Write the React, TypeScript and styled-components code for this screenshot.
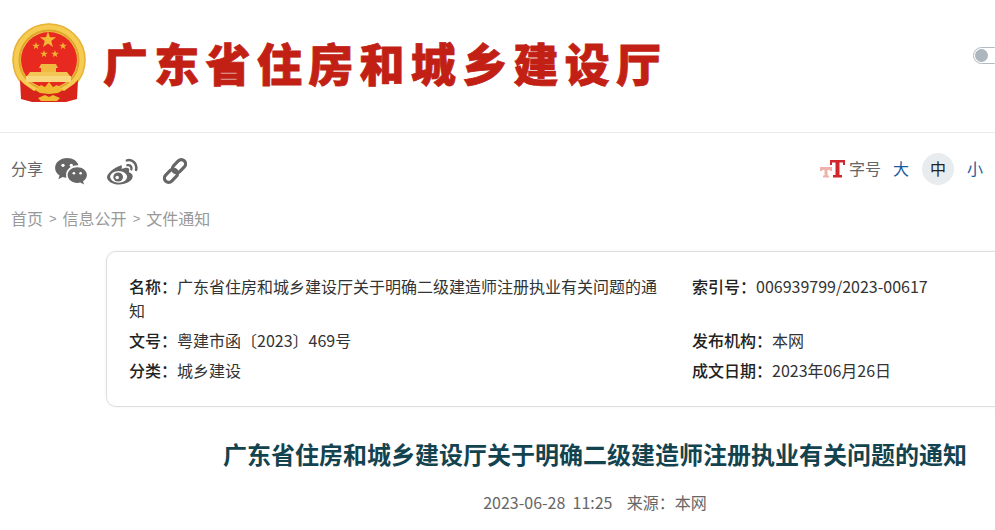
import React from 'react';
import styled, {createGlobalStyle} from 'styled-components';

const GlobalStyle = createGlobalStyle`
  html, body {
    margin: 0;
    padding: 0;
    background: #fff;
    overflow: hidden;
  }
  body {
    font-family: "Noto Sans CJK SC", "Liberation Sans", sans-serif;
  }
`;

const COLON = '\uFF1A';

const Page = styled.div`
  width: 995px;
  height: 530px;
  overflow: hidden;
`;

const Header = styled.header`
  display: flex;
  align-items: center;
  height: 133px;
  box-sizing: border-box;
  padding: 0 0 6px 12px;
  border-bottom: 1px solid #ebebeb;
`;

const SiteTitle = styled.h1`
  margin: 0 0 0 17px;
  font-size: 45px;
  font-weight: 900;
  line-height: 50px;
  letter-spacing: 6.3px;
  white-space: nowrap;
  color: #c21f15;
  -webkit-text-stroke: 0.8px #c21f15;
`;

const Toggle = styled.div`
  width: 30px;
  height: 17px;
  margin-left: auto;
  margin-right: -8px;
  flex: none;
  box-sizing: border-box;
  border: 1px solid #b4bac2;
  border-radius: 9px;
  padding: 1px;
  position: relative;
  top: -8px;
  &::before {
    content: '';
    display: block;
    width: 13px;
    height: 13px;
    border-radius: 50%;
    background: #adb5bd;
  }
`;

const ToolBar = styled.div`
  display: flex;
  align-items: center;
  justify-content: space-between;
  height: 38px;
  margin-top: 19px;
  padding: 0 4px 0 11px;
`;

const ShareGroup = styled.div`
  display: flex;
  align-items: center;
`;

const ToolLabel = styled.span`
  font-size: 16px;
  line-height: 20px;
  padding-bottom: 6px;
  color: #666;
`;

const ShareIcon = styled.svg<{$gap: number}>`
  display: block;
  fill: #666;
  margin-left: ${p => p.$gap}px;
`;

const SizeGroup = styled.div`
  display: flex;
  align-items: center;
  gap: 5px;
  padding-bottom: 4px;
`;

const SizeLabelGroup = styled.div`
  display: flex;
  align-items: center;
  margin-right: -1px;
`;

const SizeLabel = styled.span`
  font-size: 16px;
  line-height: 20px;
  padding-bottom: 2px;
  color: #666;
`;

const SizeButton = styled.span<{$active?: boolean}>`
  width: 32px;
  height: 32px;
  display: flex;
  align-items: center;
  justify-content: center;
  border-radius: 50%;
  font-size: 16px;
  padding-bottom: 2px;
  box-sizing: border-box;
  color: ${p => (p.$active ? '#222' : '#1a5a9e')};
  background: ${p => (p.$active ? '#e9ecef' : 'transparent')};
`;

const Crumbs = styled.nav`
  display: flex;
  align-items: center;
  height: 24px;
  margin-top: 16px;
  padding-left: 11px;
  font-size: 16px;
  color: #999;
`;

const CrumbSep = styled.span`
  margin: 0 6px;
  font-size: 13px;
  font-family: "Liberation Sans", sans-serif;
`;

const InfoCard = styled.section`
  width: 1000px;
  height: 156px;
  box-sizing: border-box;
  margin: 21px 0 0 106px;
  padding: 22px 0 0 22px;
  background: #fff;
  border: 1px solid #dedede;
  border-radius: 10px;
  box-shadow: 0 0 3px rgba(0, 0, 0, 0.06);
  display: grid;
  grid-template-columns: 563px 1fr;
  grid-auto-rows: min-content;
  row-gap: 6px;
`;

const InfoRow = styled.div`
  max-width: 540px;
  font-size: 16px;
  line-height: 24px;
  color: #333;
`;

const InfoKey = styled.b`
  font-weight: 500;
  color: #222;
`;

const ArticleHead = styled.div`
  width: 1000px;
  margin-left: 95px;
  text-align: center;
`;

const ArticleTitle = styled.h2`
  margin: 29px 0 0;
  font-size: 24px;
  font-weight: 700;
  line-height: 36px;
  white-space: nowrap;
  color: #13434f;
`;

const ArticleMeta = styled.div`
  margin-top: 19px;
  font-size: 16px;
  line-height: 22px;
  color: #666;
  white-space: pre;
`;

function starPath(cx: number, cy: number, r: number) {
  const pts: string[] = [];
  for (let i = 0; i < 10; i++) {
    const rad = i % 2 === 0 ? r : r * 0.4;
    const a = (Math.PI / 5) * i - Math.PI / 2;
    pts.push(`${(cx + rad * Math.cos(a)).toFixed(2)},${(cy + rad * Math.sin(a)).toFixed(2)}`);
  }
  return pts.join(' ');
}

function Emblem() {
  return (
    <svg width="74" height="80" viewBox="0 0 74 80" style={{flex: 'none'}}>
      <circle cx="37" cy="37" r="36.5" fill="#f5cb52" />
      <circle cx="37" cy="37" r="36" fill="none" stroke="#e8b237" strokeWidth="1.5" />
      <circle cx="37" cy="37" r="29.5" fill="none" stroke="#dfa52b" strokeWidth="2" />
      <circle cx="37" cy="37" r="28" fill="#e8291f" />
      <polygon points={starPath(36, 17, 8.5)} fill="#f3bb35" />
      <polygon points={starPath(24, 23, 4)} fill="#eeb233" />
      <polygon points={starPath(51, 23, 4)} fill="#eeb233" />
      <polygon points={starPath(32, 31, 4)} fill="#eeb233" />
      <polygon points={starPath(43, 31, 4)} fill="#eeb233" />
      <path d="M27 45 L29 41 H44 L46 45 H44 V49 H29 V45 Z" fill="#f0b93f" />
      <path d="M18 49 H55 L58 53 H15 Z" fill="#f4c655" />
      <path d="M14 53 H59 V59 H14 Z" fill="#f8d77e" />
      <path d="M8 57 L12 61 L22 68 L37 60 L52 68 L62 61 L66 57 L65 76 L54 79 H20 L9 76 Z" fill="#d9241b" />
      <path d="M23 67 L29 62 L33 64 L37 59 L41 64 L45 62 L51 67 L46 70 L37 71 L28 70 Z" fill="#f0b92f" />
      <path d="M26 75 L33 72 L37 74 L41 72 L48 75 L45 78 H29 Z" fill="#f0b92f" />
    </svg>
  );
}

function WechatIcon() {
  return (
    <ShareIcon $gap={12} width="32" height="27" viewBox="0 0 33 28">
      <path d="M12.5 0C5.6 0 0 4.6 0 10.3c0 3.2 1.8 6 4.6 7.9L3.4 22l4.4-2.3c1.2.4 2.6.6 4 .7-.3-1-.4-1.9-.4-2.9 0-5.6 5.2-9.9 11.8-9.9h1C23.4 3.2 18.4 0 12.5 0z" />
      <circle cx="8.2" cy="7.6" r="1.7" fill="#fff" />
      <circle cx="16.8" cy="7.6" r="1.7" fill="#fff" />
      <path d="M23 9.6c-5.5 0-10 3.6-10 8.1s4.5 8.1 10 8.1c1.1 0 2.2-.2 3.2-.5L30 27.5l-1-3.3c2.4-1.5 4-3.8 4-6.5 0-4.5-4.5-8.1-10-8.1z" />
      <circle cx="19.5" cy="15.8" r="1.4" fill="#fff" />
      <circle cx="26.5" cy="15.8" r="1.4" fill="#fff" />
    </ShareIcon>
  );
}

function WeiboIcon() {
  return (
    <ShareIcon $gap={20} width="32" height="27" viewBox="0 0 33 27">
      <path d="M13.5 7.5C6.5 10 0 15.5 0 19.5c0 4.2 6 7.5 12.5 7.5C20 27 26.5 23 26.5 18.5c0-2.5-2-3.7-4-4.3.6-1.7.6-3 0-3.8-1.3-1.6-4.7-.8-7.5.5.7-2.5.5-4.7-1.5-3.4z" />
      <ellipse cx="12" cy="19" rx="8.8" ry="6" fill="#fff" />
      <ellipse cx="11.5" cy="19.2" rx="5" ry="4.6" />
      <circle cx="10.5" cy="19.8" r="1.8" fill="#fff" />
      <path d="M20.5 2c6-1.5 11 3.8 9.5 9.8" fill="none" stroke="#666" strokeWidth="2.6" strokeLinecap="round" />
      <path d="M21 7c2.8-.6 4.8 1.7 4.1 4.3" fill="none" stroke="#666" strokeWidth="2.4" strokeLinecap="round" />
    </ShareIcon>
  );
}

function LinkIcon() {
  return (
    <ShareIcon $gap={24} width="24" height="26" viewBox="0 0 24 26">
      <g fill="none" stroke="#666" strokeWidth="3.2">
        <rect x="8.5" y="4" width="15" height="8.5" rx="4.25" transform="rotate(-45 16 8.25)" />
        <rect x="0.5" y="13.5" width="15" height="8.5" rx="4.25" transform="rotate(-45 8 17.75)" />
      </g>
    </ShareIcon>
  );
}

function FontSizeIcon() {
  return (
    <svg width="25" height="18" viewBox="0 0 25 18" style={{display: 'block', marginRight: 4}}>
      <path d="M0 7 H12 V11 H10 V10 H7.5 V15.5 H9 V17.5 H3 V15.5 H4.5 V10 H2 V11 H0 Z" fill="#efb1ab" />
      <path d="M10 0 H25 V5 H23 V2.5 H19.5 V15 H22 V17.5 H13 V15 H15.5 V2.5 H12 V5 H10 Z" fill="#d0262c" />
    </svg>
  );
}

export default function App() {
  return (
    <Page>
      <GlobalStyle />
      <Header>
        <Emblem />
        <SiteTitle>广东省住房和城乡建设厅</SiteTitle>
        <Toggle />
      </Header>
      <ToolBar>
        <ShareGroup>
          <ToolLabel>分享</ToolLabel>
          <WechatIcon />
          <WeiboIcon />
          <LinkIcon />
        </ShareGroup>
        <SizeGroup>
          <SizeLabelGroup>
            <FontSizeIcon />
            <SizeLabel>字号</SizeLabel>
          </SizeLabelGroup>
          <SizeButton>大</SizeButton>
          <SizeButton $active>中</SizeButton>
          <SizeButton>小</SizeButton>
        </SizeGroup>
      </ToolBar>
      <Crumbs>
        首页<CrumbSep>&gt;</CrumbSep>信息公开<CrumbSep>&gt;</CrumbSep>文件通知
      </Crumbs>
      <InfoCard>
        <InfoRow>
          <InfoKey>名称{COLON}</InfoKey>
          广东省住房和城乡建设厅关于明确二级建造师注册执业有关问题的通知
        </InfoRow>
        <InfoRow>
          <InfoKey>索引号{COLON}</InfoKey>
          006939799/2023-00617
        </InfoRow>
        <InfoRow>
          <InfoKey>文号{COLON}</InfoKey>
          粤建市函〔2023〕469号
        </InfoRow>
        <InfoRow>
          <InfoKey>发布机构{COLON}</InfoKey>
          本网
        </InfoRow>
        <InfoRow>
          <InfoKey>分类{COLON}</InfoKey>
          城乡建设
        </InfoRow>
        <InfoRow>
          <InfoKey>成文日期{COLON}</InfoKey>
          2023年06月26日
        </InfoRow>
      </InfoCard>
      <ArticleHead>
        <ArticleTitle>广东省住房和城乡建设厅关于明确二级建造师注册执业有关问题的通知</ArticleTitle>
        <ArticleMeta>{`2023-06-28  11:25    来源${COLON}本网`}</ArticleMeta>
      </ArticleHead>
    </Page>
  );
}
